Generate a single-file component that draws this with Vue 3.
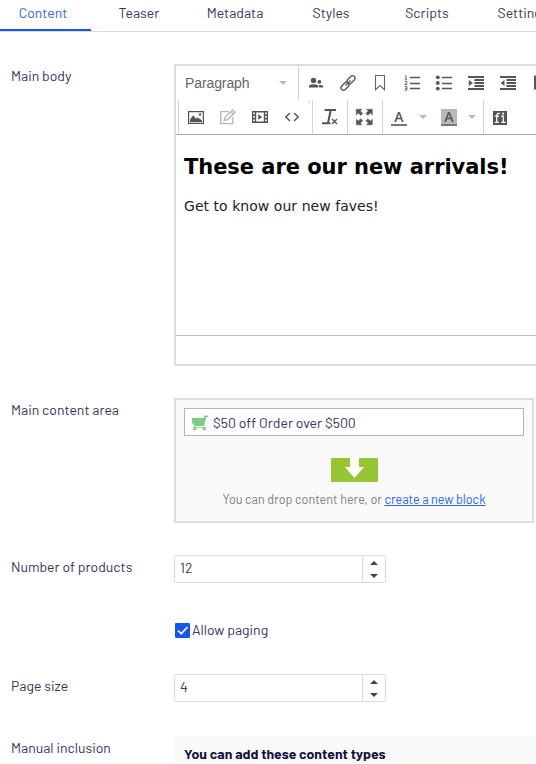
<script setup>
import { ref } from 'vue'

const tabs = ['Content', 'Teaser', 'Metadata', 'Styles', 'Scripts', 'Settings']
const active = ref('Content')
const paging = ref(true)
const products = ref(12)
const pageSize = ref(4)
</script>

<template>
  <main class="page">
    <nav class="tabs">
      <a v-for="t in tabs" :key="t" class="tab" :class="[t.toLowerCase(), { active: t === active }]" @click="active = t"><span>{{ t }}</span></a>
    </nav>

    <section class="row body-row">
      <div class="label main-body">Main body</div>
      <div class="editor">
        <div class="toolbar">
          <div class="tools">
            <div class="format"><span>Paragraph</span><i class="caret"></i></div>
            <div class="group first">
              <svg viewBox="0 0 20 20"><circle cx="7.5" cy="7.5" r="2.7" fill="#555"/><path d="M3 14.5v-1.3c0-1.2 2-1.9 4.5-1.9s4.7.7 4.7 1.9v1.3z" fill="#555"/><circle cx="13.4" cy="8.8" r="1.9" fill="#555"/><path d="M13 12c2.2-.3 4.1.5 4.1 1.3v1.2h-4z" fill="#555"/></svg>
              <svg viewBox="0 0 20 20"><g fill="none" stroke="#555" stroke-width="1.3"><rect x="-4.6" y="-2.5" width="9.2" height="5" rx="2.5" transform="translate(13 6.8) rotate(-45)"/><rect x="-4.6" y="-2.5" width="9.2" height="5" rx="2.5" transform="translate(7 13.2) rotate(-45)"/><path d="M7.5 12.5l5-5"/></g></svg>
              <svg viewBox="0 0 20 20"><path d="M5.5 2.5h9v14.2L10 12.5l-4.5 4.2z" fill="none" stroke="#666" stroke-width="1.1"/></svg>
              <svg viewBox="0 0 20 20"><path d="M8 4.5h10M8 10.5h10M8 15.5h10" stroke="#555" stroke-width="1.3"/><path d="M3 2.7h1V6M2.7 6.2h2.6M2.6 8.3h2.2v1.5l-2 1.7h2.5M2.6 13.6h2.3v3.6H2.6M3 15.4h2" fill="none" stroke="#666" stroke-width="1"/></svg>
              <svg viewBox="0 0 20 20"><path d="M8 4.5h10M8 10.5h10M8 15.5h10" stroke="#555" stroke-width="1.5"/><g fill="#555"><circle cx="3.8" cy="4.3" r="1.9"/><circle cx="3.8" cy="10" r="1.9"/><circle cx="3.8" cy="15.6" r="1.9"/></g></svg>
              <svg viewBox="0 0 20 20"><path d="M2 4h16M8.5 7h9.5M8.5 10h9.5M8.5 13h9.5M2 16h16" stroke="#555" stroke-width="1.9"/><path d="M2.2 10h2M3.2 7.5l3.3 2.5-3.3 2.5z" stroke="#555" stroke-width=".6" fill="#555"/></svg>
              <svg viewBox="0 0 20 20"><path d="M2 4h16M8.5 7h9.5M8.5 10h9.5M8.5 13h9.5M2 16h16" stroke="#555" stroke-width="1.9"/><path d="M6.5 7L2.6 10l3.9 3z" fill="#555"/></svg>
              <svg viewBox="0 0 20 20"><path d="M5 3.5h11v12H5z" fill="none" stroke="#555" stroke-width="2"/></svg>
            </div>
          </div>
          <div class="tools second">
            <div class="group insert">
              <svg viewBox="0 0 20 20"><path d="M2.6 4.6h14.8v11.8H2.6z" fill="none" stroke="#555" stroke-width="1.2"/><path d="M4 15v-2.2l3.1-4.6 3 3.6 1.8-1.3 4.1 3V15z" fill="#555"/><circle cx="14" cy="7.5" r="1.2" fill="#555"/></svg>
              <svg viewBox="0 0 20 20"><g fill="none" stroke="#b8b8b8" stroke-width="1.4"><path d="M11 4.6H2.8v12h12V10"/><path d="M6.3 13.3l.8-3.2 7.5-7 2.4 2.4-7.4 7.1zM13 4.8l2.4 2.4"/></g></svg>
              <svg viewBox="0 0 20 20"><path d="M2 4h16v12H2z" fill="#555"/><path d="M6.2 5.5h7.6v9H6.2z" fill="#fff"/><path d="M3.2 5.5h1.7v1.7H3.2zM3.2 9h1.7v1.8H3.2zM3.2 12.6h1.7v1.7H3.2zM15.1 5.5h1.7v1.7h-1.7zM15.1 9h1.7v1.8h-1.7zM15.1 12.6h1.7v1.7h-1.7z" fill="#fff"/><path d="M8.2 7.3l4 2.7-4 2.7z" fill="#555"/></svg>
              <svg viewBox="0 0 20 20"><path d="M8 6l-4.2 4L8 14M12 6l4.2 4-4.2 4" fill="none" stroke="#555" stroke-width="1.5"/></svg>
            </div>
            <div class="group clear">
              <svg viewBox="0 0 20 20"><path d="M4.5 3h11.5M10.8 3L8 16M2 16.2h8.5" fill="none" stroke="#555" stroke-width="2"/><path d="M12 12l5 5M17 12l-5 5" stroke="#555" stroke-width="1.4"/></svg>
            </div>
            <div class="group full">
              <svg viewBox="0 0 20 20"><g fill="#555" stroke="#555" stroke-width=".5"><path d="M2.3 2.3h5.7L6.3 4l2.4 2.4-2 2L4.3 6 2.3 7.9zM18.3 2.3h-5.7L14.3 4l-2.4 2.4 2 2L16.3 6l2 1.9zM2.3 17.8H8l-1.7-1.7 2.4-2.4-2-2-2.4 2.4-2-1.9zM18.3 17.8h-5.7l1.7-1.7-2.4-2.4 2-2 2.4 2.4 2-1.9z"/></g></svg>
            </div>
            <div class="group colors">
              <div class="letter fore">A</div><i class="caret"></i>
              <div class="letter back">A</div><i class="caret"></i>
            </div>
            <div class="group find">
              <svg viewBox="0 0 20 20"><path d="M3 4h14v14H3z" fill="#555"/><path d="M6.8 15.5V8.3c0-1.7 1-2.3 3.2-1.9M4.8 9.2h4.4M4.8 15.4h4.2M11 9.2h2.3v6.2M11.2 15.4h4.4" fill="none" stroke="#fff" stroke-width="1.3"/><path d="M12.2 5.6h1.9v1.9h-1.9z" fill="#fff"/></svg>
            </div>
          </div>
        </div>
        <article class="document">
          <h2>These are our new arrivals!</h2>
          <p>Get to know our new faves!</p>
        </article>
        <div class="status"></div>
      </div>
    </section>

    <section class="row area-row">
      <div class="label main-area">Main content area</div>
      <div class="area">
        <div class="block">
          <svg class="cart" viewBox="0 0 16 16"><path d="M0 3h11.6l1-2.6H16V2h-1.7l-2 7.4v1.7H3.5v1.2H13V13H2v-2.4l2-.8H1.2L0 7.4z" fill="#7fca86"/><circle cx="2.7" cy="13.7" r="1.8" fill="#7fca86"/><circle cx="12.2" cy="13.7" r="1.8" fill="#7fca86"/></svg>
          <span>$50 off Order over $500</span>
        </div>
        <svg class="drop" viewBox="0 0 47 24"><rect width="47" height="24" rx="1" fill="#97c632"/><path d="M19 0h9v9h5L23.5 20 14 9h5z" fill="#fff"/></svg>
        <div class="hint"><span class="hint-text">You can drop content here, or</span> <a>create a new block</a></div>
      </div>
    </section>

    <section class="row number-row">
      <div class="label number-label">Number of products</div>
      <div class="spinner">
        <span class="value twelve">{{ products }}</span>
        <div class="steps"><i class="up" @click="products++"></i><i class="down" @click="products--"></i></div>
      </div>
    </section>

    <section class="row paging-row">
      <div class="label"></div>
      <div class="check" @click="paging = !paging">
        <svg viewBox="0 0 15 15"><rect width="15" height="15" rx="1" fill="#1456f1"/><path v-if="paging" d="M3 7.5l3.2 3.2L12.5 4" fill="none" stroke="#fff" stroke-width="1.7"/></svg>
        <span>Allow paging</span>
      </div>
    </section>

    <section class="row size-row">
      <div class="label size-label">Page size</div>
      <div class="spinner">
        <span class="value">{{ pageSize }}</span>
        <div class="steps"><i class="up" @click="pageSize++"></i><i class="down" @click="pageSize--"></i></div>
      </div>
    </section>

    <section class="row manual-row">
      <div class="label manual-label">Manual inclusion</div>
      <div class="types"><span>You can add these content types</span></div>
    </section>
  </main>
</template>

<style>
body { margin: 0; background: #fff; overflow: hidden; }
</style>

<style scoped>
* { box-sizing: border-box; }
.page { width: 536px; height: 764px; overflow: hidden; font: 14px/18px Barlow, Roboto, sans-serif; color: #35365b; }
.page svg { flex: none; display: block; }
.tabs { display: flex; height: 32px; border-bottom: 1px solid #dcdcdc; }
.tab { flex: 0 0 96px; height: 31px; padding-top: 4px; text-align: center; white-space: nowrap; }
.tab.content { flex-basis: 91px; padding-right: 5px; }
.tab.active { color: #2a66f0; border-bottom: 2px solid #1456f1; }
.row { display: flex; align-items: flex-start; }
.label { flex: 0 0 174px; padding-left: 11px; white-space: nowrap; }
.body-row { margin-top: 32px; height: 302px; }
.body-row .label { padding-top: 3px; }
.editor { flex: 0 0 400px; height: 302px; border: 2px solid #ddd; }
.toolbar { height: 69px; border-bottom: 1px solid #aaa; }
.tools { display: flex; height: 34px; }
.format { width: 123px; height: 34px; display: flex; align-items: center; justify-content: space-between; padding: 0 11px 0 9px; border-right: 1px solid #d4d4d4; font: 14px/20px "Liberation Sans", sans-serif; color: #666; letter-spacing: -.1px; }
.caret { flex: none; width: 0; height: 0; border: 4px solid transparent; border-top-color: #b3b9be; border-bottom: 0; }
.group { display: flex; align-items: center; height: 34px; }
.group svg { width: 20px; height: 20px; }
.first { gap: 12px; padding-left: 7px; }
.insert { width: 135px; margin-left: 2px; padding-left: 7px; gap: 12px; border-left: 1px solid #d4d4d4; border-right: 1px solid #d4d4d4; background: linear-gradient(#d4d4d4, #d4d4d4) 130px 0 / 1px 3px no-repeat; }
.clear { width: 35px; padding-left: 7px; border-right: 1px solid #d4d4d4; }
.full { width: 35px; padding-left: 6px; border-right: 1px solid #d4d4d4; }
.colors { width: 101px; padding-left: 8px; border-right: 1px solid #d4d4d4; }
.letter { width: 16px; height: 17px; border-bottom: 2px solid #777; text-align: center; font: 600 14px/16px "Open Sans", sans-serif; color: #555; }
.fore + .caret { margin: 0 14px 0 12px; }
.back { background: #b8b8b8; }
.back + .caret { margin-left: 11px; }
.find { padding-left: 6px; }
.document { height: 200px; padding: 18px 8px 0; font-family: "DejaVu Sans", Verdana, sans-serif; color: #000; }
h2 { margin: 0; font-size: 21px; line-height: 28px; white-space: nowrap; letter-spacing: -.05px; }
p { margin: 15px 0 0; font-size: 14px; line-height: 20px; color: #222; letter-spacing: .04px; }
.status { height: 29px; border-top: 1px solid #bebebe; }
.area-row { margin-top: 32px; height: 125px; }
.area-row .label { padding-top: 3px; }
.area { width: 360px; height: 125px; border: 2px solid #ddd; background: #fafafa; padding: 8px; display: flex; flex-direction: column; align-items: center; }
.block { width: 340px; height: 28px; flex: none; border: 1px solid #aeb6bf; background: #fff; display: flex; align-items: center; padding: 1px 0 0 7px; gap: 5px; }
.cart { width: 16px; height: 16px; }
.drop { width: 47px; height: 24px; margin-top: 22px; }
.hint { margin-top: 9px; font-size: 12.6px; line-height: 17px; color: #808080; white-space: nowrap; }
.hint a { color: #2a66f0; text-decoration: underline; }
.number-row { margin-top: 32px; height: 28px; }
.number-row .label, .size-row .label { padding-top: 3px; }
.spinner { width: 212px; height: 28px; border: 1px solid #dcdcdc; border-radius: 2px; display: flex; }
.value { flex: 1; padding: 3px 0 0 5px; }
.steps { width: 23px; border-left: 1px solid #dcdcdc; display: flex; flex-direction: column; align-items: center; gap: 9px; padding: 5px 1px 0 0; }
.up, .down { width: 0; height: 0; border: 4px solid transparent; }
.up { border-top: 0; border-bottom-color: #444; }
.down { border-bottom: 0; border-top-color: #444; }
.paging-row { margin-top: 38px; height: 19px; }
.check { display: flex; align-items: center; gap: 2px; padding-left: 1px; }
.check svg { width: 15px; height: 15px; }
.size-row { margin-top: 34px; height: 28px; }
.manual-row { margin-top: 34px; }
.manual-row .label { padding-top: 3px; }
.types { flex: 1; height: 28px; padding: 9px 10px; background: #f8faf9; color: #12123c; font-weight: 700; white-space: nowrap; }
</style>
